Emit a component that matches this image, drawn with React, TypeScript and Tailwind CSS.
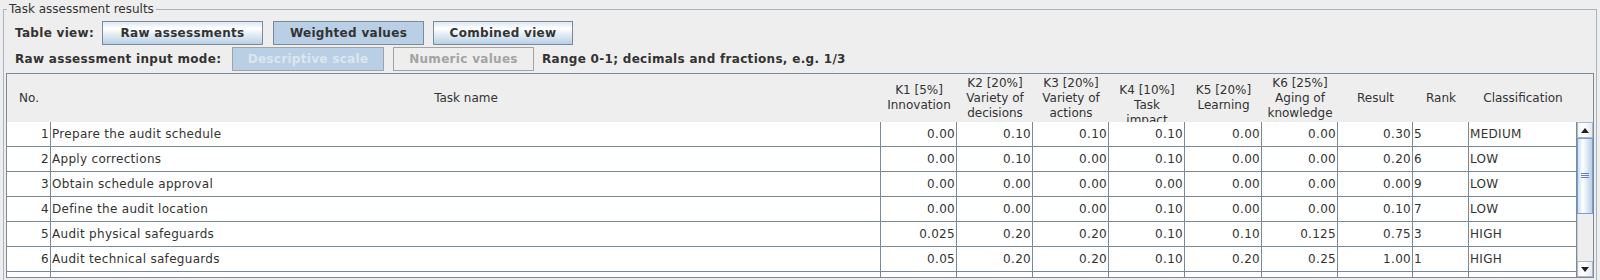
import React from 'react'

const headers: { lines: string[]; shift?: boolean }[] = [
  { lines: ['No.'] },
  { lines: ['Task name'] },
  { lines: ['K1 [5%]', 'Innovation'] },
  { lines: ['K2 [20%]', 'Variety of', 'decisions'] },
  { lines: ['K3 [20%]', 'Variety of', 'actions'] },
  { lines: ['K4 [10%]', 'Task', 'impact'], shift: true },
  { lines: ['K5 [20%]', 'Learning'] },
  { lines: ['K6 [25%]', 'Aging of', 'knowledge'] },
  { lines: ['Result'] },
  { lines: ['Rank'] },
  { lines: ['Classification'] },
]

const rows = [
  [1, 'Prepare the audit schedule', '0.00', '0.10', '0.10', '0.10', '0.00', '0.00', '0.30', '5', 'MEDIUM'],
  [2, 'Apply corrections', '0.00', '0.10', '0.00', '0.10', '0.00', '0.00', '0.20', '6', 'LOW'],
  [3, 'Obtain schedule approval', '0.00', '0.00', '0.00', '0.00', '0.00', '0.00', '0.00', '9', 'LOW'],
  [4, 'Define the audit location', '0.00', '0.00', '0.00', '0.10', '0.00', '0.00', '0.10', '7', 'LOW'],
  [5, 'Audit physical safeguards', '0.025', '0.20', '0.20', '0.10', '0.10', '0.125', '0.75', '3', 'HIGH'],
  [6, 'Audit technical safeguards', '0.05', '0.20', '0.20', '0.10', '0.20', '0.25', '1.00', '1', 'HIGH'],
  ['', '', '', '', '', '', '', '', '', '', ''],
]

// Ocean-style gradient button
const btn =
  'flex h-[24px] items-center justify-center border border-[#7a8a99] text-[12px] font-bold tracking-[0.3px] text-[#333333] bg-[linear-gradient(to_bottom,#dde8f3,#ffffff_30%,#b8cfe5)]'

function Arrow({ up }: { up?: boolean }) {
  return (
    <div className="flex h-[16px] w-[16px] items-center justify-center border border-[#b0b8c0] bg-[linear-gradient(to_right,#f4f7fb,#ffffff_40%,#e3eaf2)]">
      <svg width="8" height="5" viewBox="0 0 8 5">
        {up ? <polygon points="0,5 8,5 4,0" fill="#222" /> : <polygon points="0,0 8,0 4,5" fill="#222" />}
      </svg>
    </div>
  )
}

export default function App() {
  return (
    <div className="h-[280px] w-[1600px] overflow-hidden bg-[#eeeeee] pt-[2px] font-['DejaVu_Sans',sans-serif] text-[#333333]">
      <fieldset className="mx-[3px] h-[300px] border border-[#a8b4c0]">
        <legend className="ml-[3px] px-[2px] text-[12px] leading-[15px]">Task assessment results</legend>

        {/* Table view */}
        <div className="mt-[4px] flex h-[24px] items-center pl-[11px] text-[12px] font-bold tracking-[0.3px]">
          <span className="w-[87px]">Table view:</span>
          <div className={`${btn} w-[161px]`}>Raw assessments</div>
          <div className="ml-[10px] flex h-[24px] w-[151px] items-center justify-center border border-[#7a8a99] bg-[#b8cfe5]">
            Weighted values
          </div>
          <div className={`${btn} ml-[9px] w-[140px]`}>Combined view</div>
        </div>

        {/* input mode */}
        <div className="mt-[2px] flex h-[24px] items-center pl-[11px] text-[12px] font-bold tracking-[0.3px]">
          <span className="w-[217px]">Raw assessment input mode:</span>
          <div className="flex h-[24px] w-[152px] items-center justify-center border border-[#a3a3a3] bg-[#b8cfe5] text-[#dde6ef]">
            Descriptive scale
          </div>
          <div className="ml-[9px] flex h-[24px] w-[141px] items-center justify-center border border-[#a3a3a3] text-[#a3a3a3]">
            Numeric values
          </div>
          <span className="ml-[8px]">Range 0-1; decimals and fractions, e.g. 1/3</span>
        </div>

        {/* table */}
        <div className="mx-[2px] mt-[2px] border border-[#7a8a99] bg-[#eeeeee]">
          <div className="grid h-[48px] grid-cols-[44px_830px_76px_76px_76px_76px_77px_76px_75px_56px_108px_16px] text-[12px] leading-[15px]">
            {headers.map((h, i) => (
              <div key={i} className="flex flex-col items-center justify-center overflow-hidden text-center">
                <div className={h.shift ? 'relative top-[7px]' : ''}>
                  {h.lines.map((l) => (
                    <div key={l} className="whitespace-nowrap">
                      {l}
                    </div>
                  ))}
                </div>
              </div>
            ))}
            <div />
          </div>

          <div className="flex h-[155px]">
            <div className="flex-1 overflow-hidden bg-white">
              {rows.map((r, ri) => (
                <div
                  key={ri}
                  className="grid h-[25px] grid-cols-[44px_830px_76px_76px_76px_76px_77px_76px_75px_56px_108px] border-b border-[#7a8a99] text-[12px] leading-[24px] tracking-[0.3px]"
                >
                  {r.map((c, ci) => (
                    <div
                      key={ci}
                      className={
                        'overflow-hidden whitespace-nowrap border-r border-[#7a8a99] ' +
                        (ci === 1 || ci >= 9 ? 'pl-[1px] text-left' : 'pr-[1px] text-right')
                      }
                    >
                      {c}
                    </div>
                  ))}
                </div>
              ))}
            </div>

            {/* scrollbar */}
            <div className="flex w-[16px] flex-col bg-[#eeeeee]">
              <Arrow up />
              <div className="flex h-[76px] items-center justify-center border border-[#7b9cd1] bg-[linear-gradient(to_right,#c8ddf2,#ffffff_35%,#b8cfe5)]">
                <svg width="8" height="6" viewBox="0 0 8 6">
                  <line x1="0" y1="0.5" x2="8" y2="0.5" stroke="#6382bf" />
                  <line x1="0" y1="2.5" x2="8" y2="2.5" stroke="#6382bf" />
                  <line x1="0" y1="4.5" x2="8" y2="4.5" stroke="#6382bf" />
                </svg>
              </div>
              <div className="flex-1 border-l border-[#c8ced6]" />
              <Arrow />
            </div>
          </div>
        </div>
      </fieldset>
    </div>
  )
}
